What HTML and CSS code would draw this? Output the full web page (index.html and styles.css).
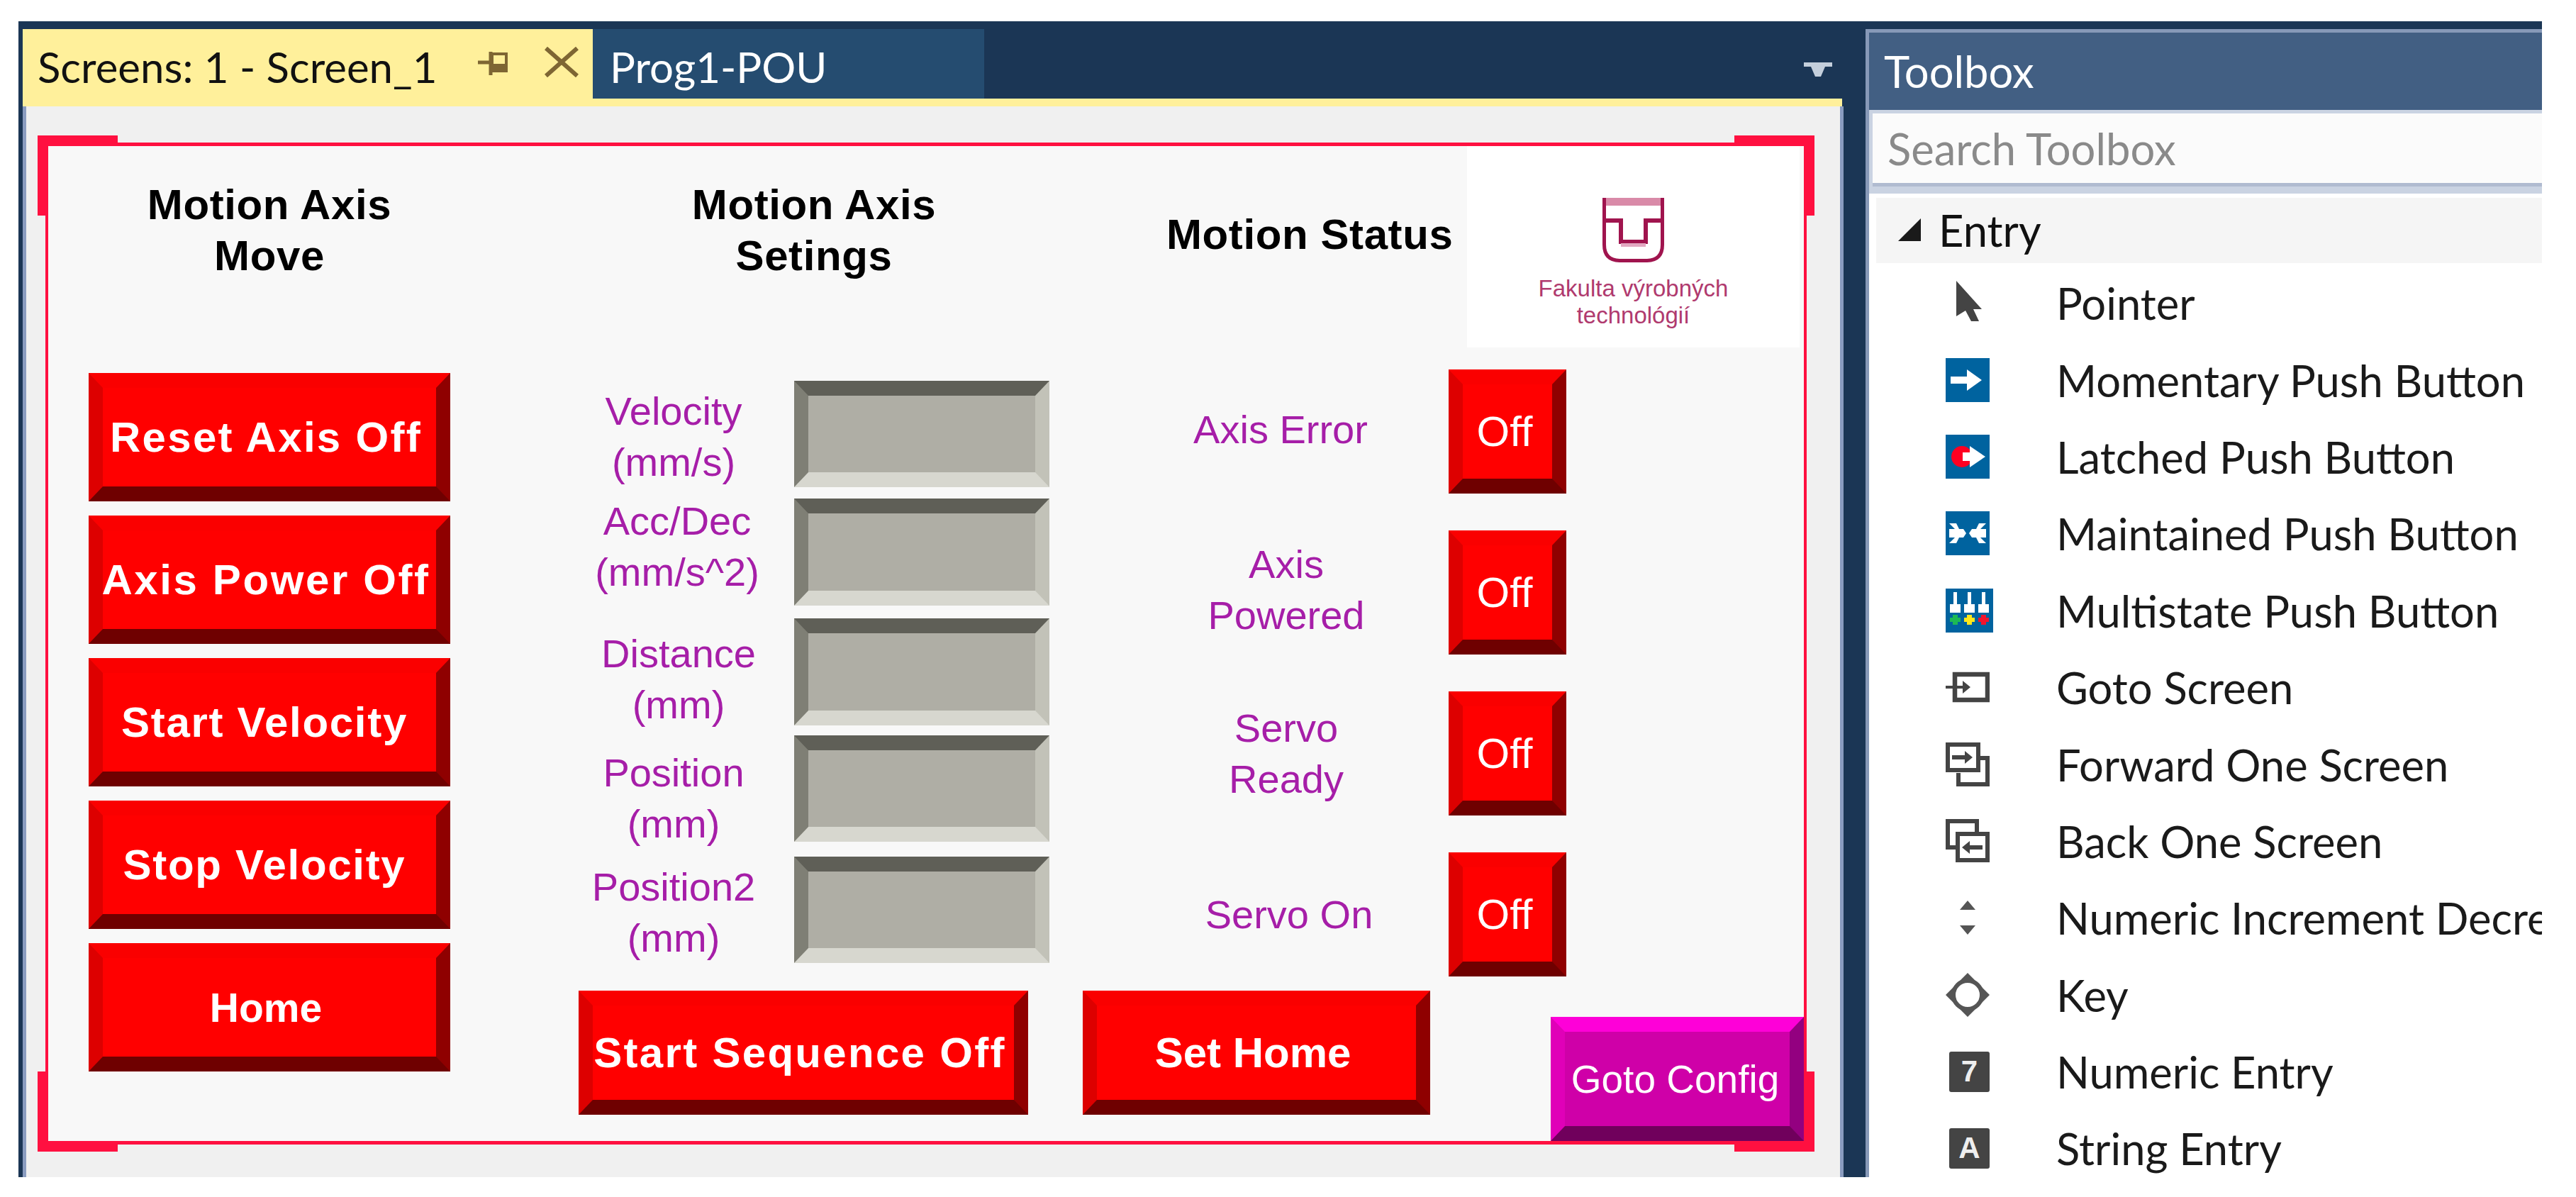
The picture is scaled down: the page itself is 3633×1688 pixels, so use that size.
FILE: index.html
```html
<!DOCTYPE html>
<html lang="en">
<head>
<meta charset="utf-8">
<title>Screens: 1 - Screen_1</title>
<link rel="stylesheet" href="styles.css">
</head>
<body>
<div class="app">
  <section class="docs">
    <div class="tabs">
      <div class="tab tab-active">
        <span class="tab-title">Screens: 1 - Screen_1</span>
        <svg class="tab-pin" viewBox="0 0 42 37"><path d="M0 17H18M18 2V35" fill="none" stroke="#7e6633" stroke-width="5"/><rect x="20" y="5" width="20" height="24" fill="none" stroke="#7e6633" stroke-width="4"/><rect x="20" y="19" width="22" height="12" fill="#7e6633"/></svg>
        <svg class="tab-close" viewBox="0 0 50 43"><path d="M3 2L47 41M47 2L3 41" fill="none" stroke="#7e6633" stroke-width="6"/></svg>
      </div>
      <div class="tab tab-other"><span class="tab-title">Prog1-POU</span></div>
      <svg class="tab-menu" viewBox="0 0 40 20"><path d="M0 0H40V6H30L24 20H16L10 6H0Z" fill="#c4cfdc"/></svg>
    </div>
    <div class="strip"></div>
    <div class="doc">
      <div class="frame">
        <i class="corner corner-tl"></i><i class="corner corner-tr"></i><i class="corner corner-bl"></i><i class="corner corner-br"></i>

        <div class="col col-move">
          <h2 class="heading">Motion Axis<br>Move</h2>
          <div class="move-buttons">
            <button class="btn btn-move">Reset Axis Off</button>
            <button class="btn btn-move btn-wide">Axis Power Off</button>
            <button class="btn btn-move btn-narrow">Start Velocity</button>
            <button class="btn btn-move btn-narrow">Stop Velocity</button>
            <button class="btn btn-move btn-tight">Home</button>
          </div>
        </div>

        <div class="col col-settings">
          <h2 class="heading">Motion Axis<br>Setings</h2>
          <div class="field field-velocity"><div class="field-label">Velocity<br>(mm/s)</div><div class="input"></div></div>
          <div class="field field-acc"><div class="field-label">Acc/Dec<br>(mm/s^2)</div><div class="input"></div></div>
          <div class="field field-distance"><div class="field-label">Distance<br>(mm)</div><div class="input"></div></div>
          <div class="field field-position"><div class="field-label">Position<br>(mm)</div><div class="input"></div></div>
          <div class="field field-position2"><div class="field-label">Position2<br>(mm)</div><div class="input"></div></div>
          <button class="btn btn-sequence">Start Sequence Off</button>
        </div>

        <div class="col col-status">
          <div class="status-top">
            <h2 class="heading heading-status">Motion Status</h2>
            <div class="logo">
              <svg class="logo-mark" viewBox="0 0 87 91">
                <rect width="87" height="11" fill="#d98aa8"/>
                <path d="M2.500 0V66Q2.500 88 24 88.500H63Q84.500 88 84.500 66V0" fill="none" stroke="#a0144e" stroke-width="5"/>
                <path d="M2 32H26V62H61V32H85" fill="none" stroke="#a0144e" stroke-width="6"/>
                <rect x="26" y="64" width="35" height="5" fill="#e2a8c0"/>
              </svg>
              <div class="logo-text">Fakulta výrobných<br>technológií</div>
            </div>
          </div>
          <div class="status-list">
            <div class="status status-error"><div class="status-label">Axis Error</div><button class="btn btn-off">Off</button></div>
            <div class="status status-powered"><div class="status-label">Axis<br>Powered</div><button class="btn btn-off">Off</button></div>
            <div class="status status-ready"><div class="status-label">Servo<br>Ready</div><button class="btn btn-off">Off</button></div>
            <div class="status status-on"><div class="status-label">Servo On</div><button class="btn btn-off">Off</button></div>
          </div>
          <div class="status-bottom">
            <button class="btn btn-home">Set Home</button>
            <button class="btn btn-goto">Goto Config</button>
          </div>
        </div>
      </div>
    </div>
  </section>

  <aside class="toolbox">
    <div class="toolbox-title">Toolbox</div>
    <div class="search-wrap"><div class="search">Search Toolbox</div></div>
    <div class="group"><svg class="group-arrow" viewBox="0 0 32 32"><path d="M32 0V32H0Z" fill="#1a1a1a"/></svg>Entry</div>
    <ul class="items">
      <li class="item"><span class="item-icon"><svg viewBox="0 0 62 62" width="62" height="62"><path d="M15 0L51 40H39L47 57H36L28 42L15 50Z" fill="#444"/></svg></span>Pointer</li>
      <li class="item"><span class="item-icon"><svg viewBox="0 0 62 62" width="62" height="62"><rect width="62" height="62" fill="#00639f"/><path d="M7 26H30V16L51 31L30 46V36H7Z" fill="#fff"/></svg></span>Momentary Push Button</li>
      <li class="item"><span class="item-icon"><svg viewBox="0 0 62 62" width="62" height="62"><rect width="62" height="62" fill="#00639f"/><circle cx="23" cy="31" r="15" fill="#ff0022"/><path d="M24 25H34V16L56 31L34 46V37H24Z" fill="#fff"/><circle cx="37" cy="31" r="6" fill="#fff"/></svg></span>Latched Push Button</li>
      <li class="item"><span class="item-icon"><svg viewBox="0 0 62 62" width="62" height="62"><rect width="62" height="62" fill="#00639f"/><path d="M5 25H13L5 17H15L19 25H25L29 31L25 37H19L15 45H5L13 37H5ZM57 25H49L57 17H47L43 25H37L33 31L37 37H43L47 45H57L49 37H57Z" fill="#fff"/></svg></span>Maintained Push Button</li>
      <li class="item"><span class="item-icon"><svg viewBox="0 0 67 62" width="67" height="62"><rect width="67" height="62" fill="#00639f"/><path d="M11 5H16V22H21V34H6V22H11ZM31 5H36V22H41V34H26V22H31ZM51 5H56V22H61V34H46V22H51Z" fill="#fff"/><path d="M10 37H17V41H21V47H17V51H10V47H6V41H10Z" fill="#1db954"/><path d="M30 37H37V41H41V47H37V51H30V47H26V41H30Z" fill="#ffe81a"/><path d="M50 37H57V41H61V47H57V51H50V47H46V41H50Z" fill="#f0142d"/></svg></span>Multistate Push Button</li>
      <li class="item"><span class="item-icon"><svg viewBox="0 0 62 62" width="62" height="62"><rect x="13" y="13" width="46" height="36" fill="none" stroke="#444" stroke-width="6.500"/><path d="M0 29H24V22L35 31L24 40V33H0Z" fill="#444"/></svg></span>Goto Screen</li>
      <li class="item"><span class="item-icon"><svg viewBox="0 0 62 62" width="62" height="62"><path d="M46 22H59V59H18V43" fill="none" stroke="#444" stroke-width="6"/><rect x="3" y="3" width="43" height="36" fill="none" stroke="#444" stroke-width="6"/><path d="M9 18H27V12L38 21L27 30V24H9Z" fill="#444"/></svg></span>Forward One Screen</li>
      <li class="item"><span class="item-icon"><svg viewBox="0 0 62 62" width="62" height="62"><path d="M16 40H3V3H44V20" fill="none" stroke="#444" stroke-width="6"/><rect x="17" y="21" width="42" height="37" fill="none" stroke="#444" stroke-width="6"/><path d="M52 37H34V31L23 40L34 49V43H52Z" fill="#444"/></svg></span>Back One Screen</li>
      <li class="item"><span class="item-icon"><svg viewBox="0 0 62 62" width="62" height="62"><path d="M31 7L42 20H20ZM31 55L42 42H20Z" fill="#555"/></svg></span>Numeric Increment Decrement</li>
      <li class="item"><span class="item-icon"><svg viewBox="0 0 62 62" width="62" height="62"><circle cx="31" cy="31" r="20" fill="none" stroke="#555" stroke-width="6"/><path d="M31 0L43 12H19ZM31 62L43 50H19ZM0 31L12 19V43ZM62 31L50 19V43Z" fill="#555"/></svg></span>Key</li>
      <li class="item"><span class="item-icon"><span class="glyph-box">7</span></span>Numeric Entry</li>
      <li class="item"><span class="item-icon"><span class="glyph-box">A</span></span>String Entry</li>
    </ul>
  </aside>
</div>
</body>
</html>
```
FILE: styles.css
```css
* { box-sizing: border-box; }
html, body { margin: 0; padding: 0; background: #fff; }
body { width: 3633px; height: 1688px; overflow: hidden; font-family: "Liberation Sans", Arial, sans-serif; }
.app { display: flex; width: 3559px; height: 1630px; margin: 30px 0 0 26px; padding-left: 6px; background: #1b3655; }

/* document pane */
.docs { display: flex; flex-direction: column; width: 2568px; margin-top: 11px; flex: none; }
.tabs { display: flex; align-items: stretch; height: 98px; position: relative; }
.tab { display: flex; align-items: center; padding-top: 7px; font-family: Lato, "Liberation Sans", sans-serif; font-size: 60px; }
.tab-active { width: 804px; background: #fff09b; color: #111; padding-left: 21px; }
.tab-other { width: 552px; background: #254c70; color: #fff; padding-left: 24px; }
.tab-title { white-space: nowrap; }
.tab-pin { width: 42px; height: 37px; margin-left: 58px; margin-top: -9px; flex: none; }
.tab-close { width: 50px; height: 43px; margin-left: 51px; margin-top: -12px; flex: none; }
.tab-menu { width: 40px; height: 20px; margin: 47px 0 0 auto; margin-right: 16px; flex: none; }
.strip { height: 11px; margin-right: 2px; background: #fff09b; }
.doc { flex: 1; min-height: 0; padding: 51px 47px 46px 27px; background: #f0f0f0; border-left: 5px solid #8a9cc0; border-right: 5px solid #8a9cc0; }

/* HMI screen */
.frame { position: relative; display: flex; width: 2484px; height: 1413px; background: #f8f8f8; border: solid #ff1040; border-width: 5px 4px; }
.corner { position: absolute; width: 113px; height: 113px; border: 0 solid #ff1040; }
.corner-tl { left: -15px; top: -15px; border-width: 15px 0 0 15px; }
.corner-tr { right: -15px; top: -15px; border-width: 15px 15px 0 0; }
.corner-bl { left: -15px; bottom: -15px; border-width: 0 0 15px 15px; }
.corner-br { right: -15px; bottom: -15px; border-width: 0 15px 15px 0; }
.col { flex: none; }
.col-move { width: 510px; margin-left: 57px; padding-top: 47px; }
.col-settings { width: 664px; margin-left: 181px; padding-top: 47px; }
.col-status { width: 1017px; margin-left: 47px; }
.heading { margin: 0; font-size: 60px; line-height: 72px; font-weight: 700; letter-spacing: .6px; color: #000; text-align: center; }

/* bevelled buttons */
.btn { display: flex; align-items: center; justify-content: center; margin: 0; padding: 0 10px 0 0; border-style: solid; border-width: 21px 20px; border-color: #fa0000 #8f0000 #6f0000 #dd0000; background: #ff0000; color: #fff; font-family: inherit; white-space: nowrap; }
.btn-move, .btn-sequence { font-size: 60px; font-weight: 700; letter-spacing: 2.3px; }
.btn-wide { letter-spacing: 2.6px; }
.btn-narrow { padding-right: 14px; letter-spacing: 1.7px; }
.btn-tight { font-size: 57px; letter-spacing: 0; }
.move-buttons { display: flex; flex-direction: column; gap: 20px; margin-top: 129px; }
.btn-move { width: 510px; height: 181px; }
.btn-sequence { width: 634px; height: 175px; margin-top: 39px; }
.btn-home { width: 490px; height: 175px; font-size: 60px; font-weight: 700; }
.btn-off { width: 166px; height: 175px; font-size: 60px; padding-right: 8px; flex: none; }
.btn-goto { position: relative; z-index: 1; width: 357px; height: 175px; margin: 37px 0 0 170px; padding: 0 6px 0 0; font-size: 55px; border-color: #fe00d8 #930080 #70005c #e000b8; background: #cf00a8; }

/* numeric fields */
.field { display: flex; height: 150px; }
.field-velocity { margin-top: 140px; }
.field-acc { margin-top: 16px; height: 151px; }
.field-distance { margin-top: 18px; height: 151px; }
.field-position { margin-top: 14px; }
.field-position2 { margin-top: 21px; }
.field-label { display: flex; flex-direction: column; justify-content: center; flex: none; width: 304px; padding-right: 36px; font-size: 56px; line-height: 72px; color: #a61ea8; text-align: center; }
.field-velocity .field-label { padding-top: 7px; }
.field-acc .field-label { padding-bottom: 16px; padding-right: 26px; }
.field-distance .field-label { padding-top: 20px; padding-right: 22px; }
.field-position .field-label { padding-top: 28px; }
.field-position2 .field-label { padding-top: 8px; }
.input { flex: none; width: 360px; border-style: solid; border-width: 21px 20px; border-color: #5f5f57 #c2c2b8 #d7d7cf #7f7f75; background: #afaea5; }

/* status column */
.status-top { display: flex; height: 284px; }
.heading-status { width: 399px; margin-left: 118px; padding-top: 89px; white-space: nowrap; flex: none; }
.logo { display: flex; flex-direction: column; align-items: center; width: 469px; height: 284px; margin-left: 25px; padding-top: 73px; background: #fff; flex: none; }
.logo-mark { width: 87px; height: 91px; flex: none; }
.logo-text { margin-top: 18px; font-size: 33px; line-height: 38px; color: #b03a6e; text-align: center; white-space: nowrap; }
.status-list { display: flex; flex-direction: column; gap: 52px; margin-top: 31px; }
.status { display: flex; align-items: center; height: 175px; }
.status-label { width: 516px; padding-left: 54px; font-size: 56px; line-height: 72px; color: #a61ea8; text-align: center; flex: none; }
.status-error .status-label { padding-left: 42px; padding-bottom: 6px; }
.status-powered .status-label { padding-left: 58px; padding-bottom: 8px; }
.status-ready .status-label { padding-left: 58px; }
.status-on .status-label { padding-left: 66px; }
.status-bottom { display: flex; align-items: flex-start; margin-top: 20px; }

/* toolbox */
.toolbox { width: 954px; margin: 11px 0 0 31px; flex: none; overflow: hidden; background: #fff; border-top: 5px solid #8799b8; border-left: 5px solid #8799b8; font-family: Lato, "Liberation Sans", sans-serif; font-size: 61.5px; }
.toolbox-title { display: flex; align-items: center; height: 109px; padding: 0 0 2px 21px; background: #425f83; color: #fff; }
.search-wrap { padding: 5px 0 10px 5px; background: #cad3e2; }
.search { display: flex; align-items: center; height: 103px; padding-left: 21px; background: #fbfbfb; border-bottom: 5px solid #b0bbd0; color: #8a8a8a; }
.group { display: flex; align-items: center; height: 92px; margin: 6px 0 2px 10px; padding: 0 0 3px 31px; background: #f5f5f5; color: #111; }
.group-arrow { width: 32px; height: 32px; margin-right: 25px; flex: none; }
.items { margin: 0; padding: 0; list-style: none; }
.item { display: flex; align-items: center; height: 108.4px; padding-left: 108px; color: #1a1a1a; white-space: nowrap; }
.item-icon { display: flex; align-items: center; width: 156px; height: 62px; flex: none; }
.glyph-box { display: flex; align-items: center; justify-content: center; width: 57px; height: 57px; margin-left: 5px; border-radius: 3px; background: #444; color: #eee; font-family: "Liberation Sans", sans-serif; font-size: 42px; font-weight: 700; }
```
